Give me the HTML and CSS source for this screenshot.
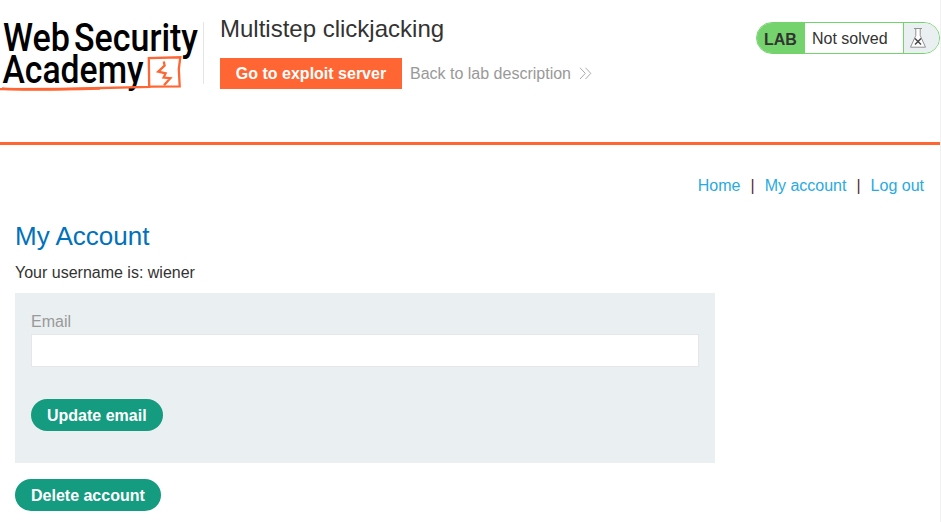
FILE: index.html
```
<!DOCTYPE html>
<html lang="en">
<head>
<meta charset="utf-8">
<title>Multistep clickjacking</title>
<link rel="stylesheet" href="styles.css">
</head>
<body>
<div class="page">
  <header class="lab-header">
    <svg class="logo" width="203" height="96" viewBox="0 0 203 96" role="img" aria-label="Web Security Academy">
      <g class="logo-text">
        <text x="3" y="50.7" textLength="67" lengthAdjust="spacingAndGlyphs">Web</text>
        <text x="74" y="50.7" textLength="124" lengthAdjust="spacingAndGlyphs">Security</text>
        <text x="2.5" y="83.3" textLength="141" lengthAdjust="spacingAndGlyphs">Academy</text>
      </g>
      <g class="logo-mark">
        <path d="M0 89.2 L60 89 L149.2 87 L148.8 58 L180.3 57.3 L178.8 69 L179.7 86.3 L150 86.6"/>
        <path d="M2 88.5 Q20 90.5 100 88.5"/>
        <path d="M163.8 61.5 L164.6 65.5 L158.2 71.7 L165.6 73.4 L163.6 77.6 L170.3 78.2 L164 85.2"/>
      </g>
    </svg>
    <div class="title-block">
      <h2>Multistep clickjacking</h2>
      <div class="actions">
        <a class="exploit">Go to exploit server</a>
        <a class="back">Back to lab description
          <svg width="13" height="13" viewBox="0 0 13 13"><path d="M1 .8 L6.3 6.4 L1 12 M6.5 .8 L11.8 6.4 L6.5 12"/></svg>
        </a>
      </div>
    </div>
    <div class="status">
      <span class="status-lab">LAB</span>
      <span class="status-text">Not solved</span>
      <span class="status-icon">
        <svg width="18" height="22" viewBox="0 0 18 22">
          <path class="flask" d="M5 1.5 H13 M6.8 1.5 V8.5 L1.5 20.2 H16.5 L11.2 8.5 V1.5"/>
          <path class="cross" d="M6 11.5 L12 17.5 M12 11.5 L6 17.5"/>
        </svg>
      </span>
    </div>
  </header>
  <nav class="links">
    <a>Home</a><span>|</span><a>My account</a><span>|</span><a>Log out</a>
  </nav>
  <main>
    <h1>My Account</h1>
    <p>Your username is: wiener</p>
    <form class="email-form">
      <label for="email">Email</label>
      <input id="email" type="email">
      <button type="button">Update email</button>
    </form>
    <button type="button">Delete account</button>
  </main>
</div>
</body>
</html>
```
FILE: styles.css
```
* { box-sizing: border-box; }
body {
  margin: 0;
  background: #fff;
  color: #333332;
  font: 16px/20px "Liberation Sans", Arial, sans-serif;
  overflow: hidden;
}
.page {
  width: 941px;
  height: 522px;
  border-right: 1px solid #f0f0f0;
}
.lab-header {
  display: flex;
  align-items: flex-start;
  height: 145px;
  border-bottom: 3px solid #ff6633;
}
.logo { flex: none; overflow: visible; }
.logo-text { font: 500 38.5px Roboto, sans-serif; fill: #000; }
.logo-mark { fill: none; stroke: #ff6633; stroke-width: 2.3; }
.title-block {
  margin-top: 22px;
  height: 62px;
  padding-left: 16px;
  border-left: 1px solid #e5e5e5;
}
h2 {
  margin: -7px 0 0;
  font-size: 24px;
  font-weight: 400;
  line-height: 28px;
}
.actions { display: flex; margin-top: 15px; line-height: 31px; }
.exploit {
  width: 182px;
  background: #ff6633;
  color: #fff;
  font-weight: 700;
  text-align: center;
}
.back { margin-left: 8px; color: #999; }
.back svg {
  margin-left: 4px;
  vertical-align: -1px;
  fill: none;
  stroke: #aaa;
}
.status {
  display: flex;
  width: 184px;
  height: 32px;
  margin: 22px 0 0 auto;
  border: 1px solid #75d36d;
  border-radius: 16px;
  overflow: hidden;
  line-height: 31px;
}
.status-lab {
  width: 48px;
  padding: 1px 0 0 7px;
  background: #75d36d;
  font-weight: 700;
}
.status-text { width: 98px; padding-left: 7px; }
.status-icon {
  flex: 1;
  padding: 4px 0 0 5px;
  border-left: 1px solid #75d36d;
  background: #eaeff2;
}
.status-icon svg { display: block; }
.flask { fill: #fff; stroke: #929292; }
.cross { stroke: #444; stroke-width: 1.4; }
.links {
  display: flex;
  justify-content: flex-end;
  gap: 10px;
  padding: 31px 16px 0 0;
}
.links a { color: #29aae2; }
.links span { color: #5c1f2e; }
main { padding: 24px 15px 0; }
h1 {
  margin: 0;
  color: #0071bc;
  font-size: 26px;
  font-weight: 400;
  line-height: 32px;
}
p { margin: 11px 0 10px; }
.email-form {
  width: 700px;
  height: 170px;
  margin-bottom: 16px;
  padding: 19px 16px;
  background: #eaeff2;
}
label { display: block; color: #999; }
input {
  display: block;
  width: 668px;
  height: 33px;
  margin: 2px 0 32px;
  border: 1px solid #e4e6e7;
  background: #fff;
}
button {
  display: block;
  height: 32px;
  padding: 1px 16px 0;
  border: 0;
  border-radius: 16px;
  background: #159b80;
  color: #fff;
  font: 700 16px/31px "Liberation Sans", Arial, sans-serif;
}
```
